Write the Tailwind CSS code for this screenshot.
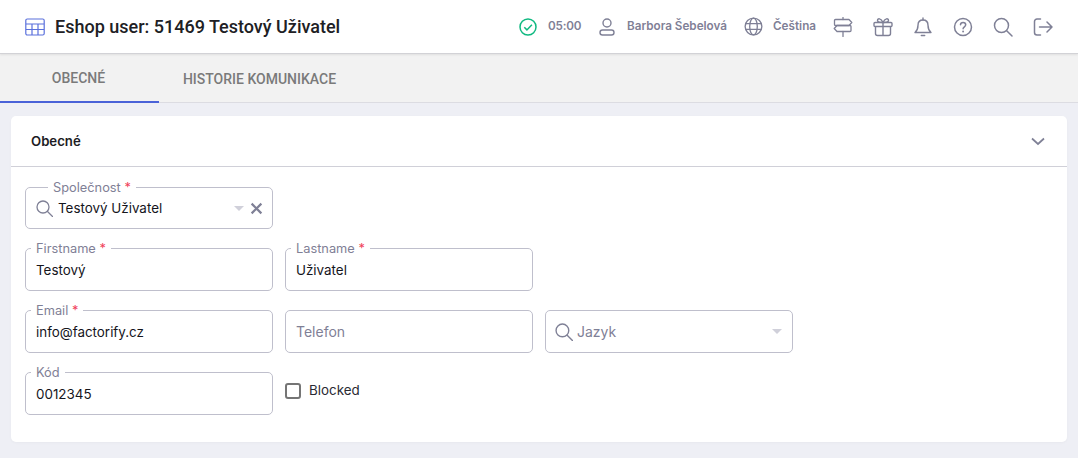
<!DOCTYPE html>
<html lang="cs">
  <head>
    <meta charset="UTF-8" />
    <title>Eshop user</title>
    <script src="https://cdn.jsdelivr.net/npm/@tailwindcss/browser@4"></script>
  </head>
  <body class="bg-[#eeeff5] font-['Inter','Noto_Sans',sans-serif] text-[#15151c] overflow-hidden">
    <div class="w-[1078px] h-[458px] flex flex-col">
      <!-- Header -->
      <header class="h-[54px] shrink-0 bg-white border-b border-[#d2d2d6] shadow-[0_1px_2px_rgba(0,0,0,0.08)] flex items-center pl-[25px] relative">
        <svg class="w-[20px] h-[20px]" viewBox="0 0 20 20" fill="none" stroke="#5a70dc" stroke-width="1.2">
          <rect x="0.8" y="2" width="18.4" height="16" rx="1.5" />
          <path d="M1 7h18M1 12.5h18M7 7v11M13 7v11" />
        </svg>
        <h1 class="ml-[10px] font-['Roboto',sans-serif] font-medium text-[18px] text-[#202024]">Eshop user: 51469 Testový Uživatel</h1>
        <div class="ml-auto flex items-center text-[#7f8096] text-[11.7px] font-semibold">
          <svg class="w-[18px] h-[18px]" viewBox="0 0 18 18" fill="none" stroke="#10b981" stroke-width="1.5">
            <circle cx="9" cy="9" r="8" />
            <path d="M5.3 9.3l2.6 2.6 5-5.2" />
          </svg>
          <span class="ml-[11px] w-[32px] whitespace-nowrap tracking-[-0.2px]">05:00</span>
          <svg class="ml-[18px] w-[18px] h-[18px]" viewBox="0 0 18 18" fill="none" stroke="#7f8096" stroke-width="1.4">
            <circle cx="9" cy="5" r="4" />
            <rect x="2" y="12" width="14" height="5" rx="2.5" />
          </svg>
          <span class="ml-[11px] w-[100px] whitespace-nowrap">Barbora Šebelová</span>
          <svg class="ml-[17px] w-[19px] h-[19px]" viewBox="0 0 20 20" fill="none" stroke="#7f8096" stroke-width="1.4">
            <circle cx="10" cy="10" r="8.8" />
            <ellipse cx="10" cy="10" rx="4" ry="8.8" />
            <path d="M1.5 7h17M1.5 13h17" />
          </svg>
          <span class="ml-[10px] w-[44px] mr-[16px] whitespace-nowrap">Čeština</span>
          <div class="flex items-center gap-[20px] mr-[25px]">
            <svg class="w-[20px] h-[20px]" viewBox="0 0 20 20" fill="none" stroke="#7f8096" stroke-width="1.3" stroke-linejoin="round" stroke-linecap="round">
              <path d="M10 0.500v2M10 14.500v5" />
              <path d="M2.500 2.500h13.500l2.800 3-2.800 3H2.500a1 1 0 0 1-1-1v-4a1 1 0 0 1 1-1z" />
              <path d="M4 8.500h13a1 1 0 0 1 1 1v4a1 1 0 0 1-1 1H4l-2.800-3L4 8.500z" />
            </svg>
            <svg class="w-[20px] h-[20px]" viewBox="0 0 20 20" fill="none" stroke="#7f8096" stroke-width="1.4" stroke-linejoin="round">
              <rect x="1" y="5.500" width="18" height="4" rx="1" />
              <path d="M2.500 9.500v7a2 2 0 0 0 2 2h11a2 2 0 0 0 2-2v-7M10 5.500v13" />
              <path d="M10 5.500C8 1 4.500 1 4.500 3.500c0 1.500 2 2 5.500 2zM10 5.500c2-4.500 5.500-4.500 5.500-2 0 1.500-2 2-5.500 2z" />
            </svg>
            <svg class="w-[20px] h-[20px]" viewBox="0 0 20 20" fill="none" stroke="#7f8096" stroke-width="1.4" stroke-linejoin="round">
              <path d="M10 3c-3.200 0-5 2.300-5 5.200 0 4-1 5.500-3 7.300h16c-2-1.800-3-3.300-3-7.300C15 5.300 13.200 3 10 3z" />
              <path d="M10 1v2M8.300 18.500h3.400" stroke-linecap="round" />
            </svg>
            <svg class="w-[20px] h-[20px]" viewBox="0 0 20 20" fill="none" stroke="#7f8096" stroke-width="1.5" stroke-linecap="round">
              <circle cx="10" cy="10" r="8.500" />
              <path d="M7.500 7.800c0-3.200 5.200-3.200 5.200 0 0 2-2.600 2-2.600 4" />
              <path d="M10.100 14.500v.1" stroke-width="1.900" />
            </svg>
            <svg class="w-[20px] h-[20px]" viewBox="0 0 20 20" fill="none" stroke="#7f8096" stroke-width="1.5" stroke-linecap="round">
              <circle cx="8.500" cy="8.500" r="7" />
              <path d="M13.700 13.700l5.300 5.300" />
            </svg>
            <svg class="w-[20px] h-[20px]" viewBox="0 0 20 20" fill="none" stroke="#7f8096" stroke-width="1.5" stroke-linecap="round" stroke-linejoin="round">
              <path d="M7.500 2H4a2.500 2.500 0 0 0-2.500 2.500v11A2.500 2.500 0 0 0 4 18h3.500" />
              <path d="M6.500 10h12.500M14 5l5 5-5 5" />
            </svg>
          </div>
        </div>
      </header>

      <!-- Tabs -->
      <nav class="h-[49px] shrink-0 bg-[#f2f2f2] border-b border-[#dcdce2] flex font-['Roboto',sans-serif] font-medium text-[14px] text-[#7a7a7a]">
        <div class="w-[159px] h-[49px] pt-[2px] pr-[2px] flex items-center justify-center border-b-2 border-[#4a62d8]">OBECNÉ</div>
        <div class="w-[201px] h-[49px] pt-[2px] flex items-center justify-center">HISTORIE KOMUNIKACE</div>
      </nav>

      <!-- Card -->
      <section class="mt-[13px] ml-[11px] w-[1056px] h-[326px] bg-white rounded-[5px] shadow-[0_1px_3px_rgba(0,0,0,0.03)]">
        <div class="h-[51px] border-b border-[#d0d0d8] flex items-center justify-between pl-[20px] pr-[22px]">
          <h2 class="mt-[2px] font-semibold text-[13.2px] text-[#1c1c24]">Obecné</h2>
          <svg class="w-[14px] h-[9px]" viewBox="0 0 14 9" fill="none" stroke="#7f8096" stroke-width="1.700">
            <path d="M1 1.500l6 5.500 6-5.500" />
          </svg>
        </div>

        <div class="pl-[14px] pt-[20px] flex flex-col text-[13.4px]">
          <!-- Společnost -->
          <div class="flex gap-[12px]">
            <div class="relative w-[248px] h-[42px] border border-[#bfbfcc] rounded-[5px] flex items-center pl-[10px] pr-[9px]">
              <span class="absolute left-[22px] -top-[8px] bg-white px-[5px] text-[#7f8096] text-[12.8px] leading-[16px] whitespace-nowrap">Společnost <span class="text-[#f0405a]">*</span></span>
              <svg class="w-[17px] h-[17px] shrink-0" viewBox="0 0 17 17" fill="none" stroke="#7f8096" stroke-width="1.300" stroke-linecap="round">
                <circle cx="7" cy="7" r="6" />
                <path d="M11.500 11.500l5 5" />
              </svg>
              <span class="ml-[5px]">Testový Uživatel</span>
              <span class="ml-auto w-0 h-0 border-x-[5px] border-x-transparent border-t-[5px] border-t-[#d0d0da]"></span>
              <svg class="ml-[6px] w-[13px] h-[13px]" viewBox="0 0 12 12" fill="none" stroke="#7f8096" stroke-width="2">
                <path d="M1.500 1.500l9 9M10.500 1.500l-9 9" />
              </svg>
            </div>
          </div>

          <!-- Firstname / Lastname -->
          <div class="flex gap-[12px] mt-[19px]">
            <div class="relative w-[248px] h-[43px] border border-[#bfbfcc] rounded-[5px] flex items-center pl-[10px]">
              <span class="absolute left-[5px] -top-[8px] bg-white px-[5px] text-[#7f8096] text-[12.8px] leading-[16px] whitespace-nowrap">Firstname <span class="text-[#f0405a]">*</span></span>
              <span class="mt-[2px]">Testový</span>
            </div>
            <div class="relative w-[248px] h-[43px] border border-[#bfbfcc] rounded-[5px] flex items-center pl-[10px]">
              <span class="absolute left-[5px] -top-[8px] bg-white px-[5px] text-[#7f8096] text-[12.8px] leading-[16px] whitespace-nowrap">Lastname <span class="text-[#f0405a]">*</span></span>
              <span class="mt-[2px]">Uživatel</span>
            </div>
          </div>

          <!-- Email / Telefon / Jazyk -->
          <div class="flex gap-[12px] mt-[19px]">
            <div class="relative w-[248px] h-[43px] border border-[#bfbfcc] rounded-[5px] flex items-center pl-[10px]">
              <span class="absolute left-[5px] -top-[8px] bg-white px-[5px] text-[#7f8096] text-[12.8px] leading-[16px] whitespace-nowrap">Email <span class="text-[#f0405a]">*</span></span>
              <span class="mt-[2px]">info@factorify.cz</span>
            </div>
            <div class="w-[248px] h-[43px] border border-[#bfbfcc] rounded-[5px] flex items-center pl-[10px] text-[#7f8096] text-[14px]">Telefon</div>
            <div class="w-[248px] h-[43px] border border-[#bfbfcc] rounded-[5px] flex items-center pl-[9px] pr-[10px] text-[#7f8096] text-[14px]">
              <svg class="w-[18px] h-[18px] shrink-0" viewBox="0 0 17 17" fill="none" stroke="#7f8096" stroke-width="1.300" stroke-linecap="round">
                <circle cx="7" cy="7" r="6" />
                <path d="M11.500 11.500l5 5" />
              </svg>
              <span class="ml-[4px]">Jazyk</span>
              <span class="ml-auto w-0 h-0 border-x-[5px] border-x-transparent border-t-[5px] border-t-[#d0d0da]"></span>
            </div>
          </div>

          <!-- Kód / Blocked -->
          <div class="flex gap-[12px] mt-[19px]">
            <div class="relative w-[248px] h-[43px] border border-[#bfbfcc] rounded-[5px] flex items-center pl-[10px]">
              <span class="absolute left-[5px] -top-[8px] bg-white px-[5px] text-[#7f8096] text-[12.8px] leading-[16px] whitespace-nowrap">Kód</span>
              <span class="mt-[2px]">0012345</span>
            </div>
            <label class="flex items-start pt-[10px] h-[43px]">
              <span class="w-[16px] h-[16px] mt-[1px] border-2 border-[#757575] rounded-[3px]"></span>
              <span class="ml-[8px] text-[#2a2a33] leading-[16px]">Blocked</span>
            </label>
          </div>
        </div>
      </section>
    </div>
  </body>
</html>
